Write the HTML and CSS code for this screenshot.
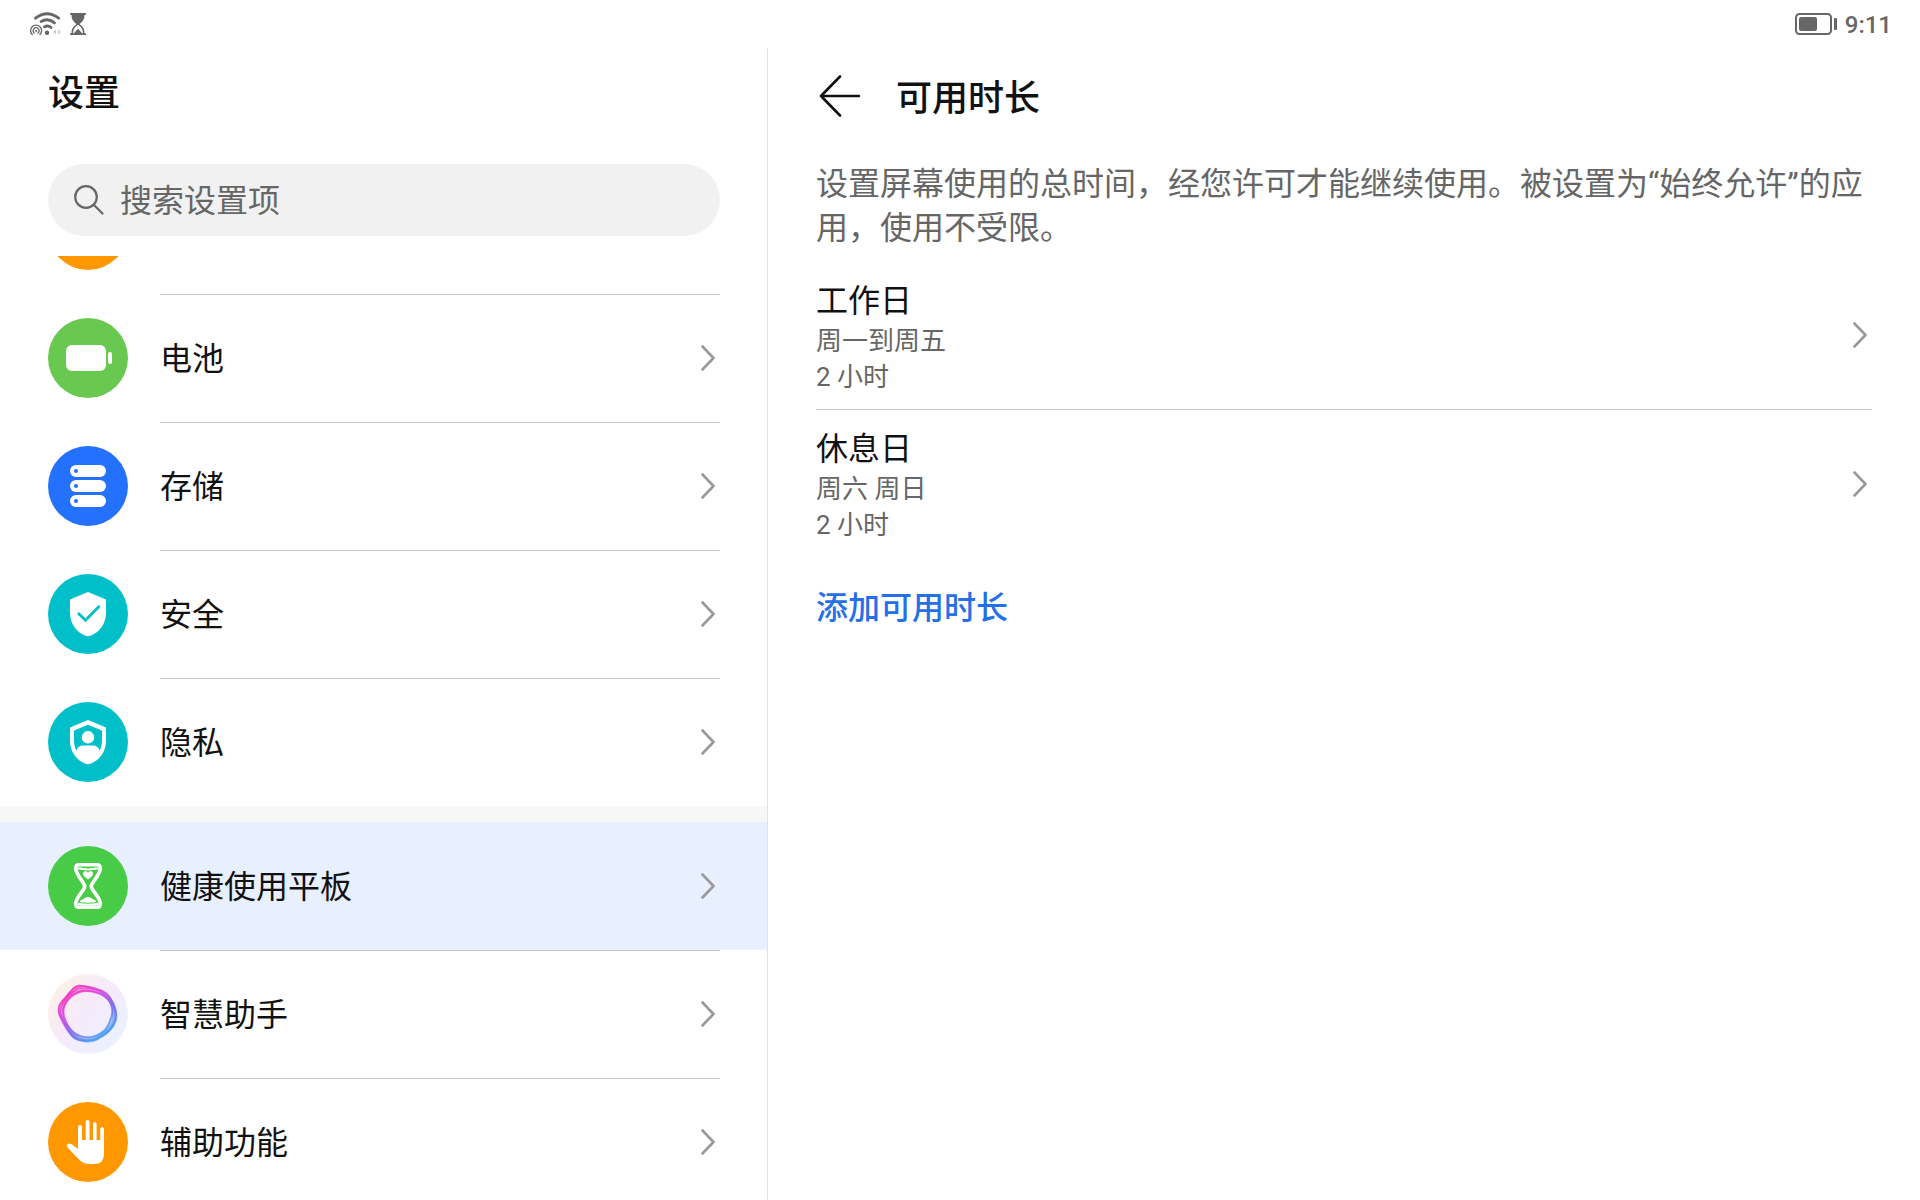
FILE: index.html
```html
<!DOCTYPE html>
<html lang="zh-CN">
<head>
<meta charset="utf-8">
<meta name="viewport" content="width=device-width, initial-scale=1">
<title>设置</title>
<link rel="stylesheet" href="styles.css">
</head>
<body>
<svg class="defs" aria-hidden="true">
  <symbol id="chevron" viewBox="0 0 14 26"><path d="M1.5 1.5 12.5 13 1.5 24.5" fill="none" stroke="currentColor" stroke-width="2.6" stroke-linecap="round" stroke-linejoin="round"/></symbol>
</svg>
<header class="status">
  <div class="status-group">
    <svg width="32" height="24" viewBox="0 0 32 24" fill="none" stroke="#666" stroke-linecap="round">
      <path d="M5.5 6.2Q17 -2.6 28.700 6.200" stroke-width="2.800"/>
      <path d="M11 9.600Q17.500 5.400 24.500 10.800" stroke-width="2.800"/>
      <path d="M14.500 14.800Q18 13 21 15.500" stroke-width="2.800"/>
      <circle cx="17" cy="20.700" r="2.200" fill="#666" stroke="none"/>
      <path d="M2.200 22.500A5.500 5.500 0 1 1 10 22.500M4.200 21A3 3 0 1 1 8 21" stroke-width="1.300"/>
      <circle cx="6.100" cy="19" r="1" fill="#666" stroke="none"/>
      <path d="M26 17.500v5l-3-2.500zM28 17.500v5l3-2.500z" fill="#ccc" stroke="none"/>
    </svg>
    <svg width="16" height="22" viewBox="0 0 16 22">
      <path d="M0 0h16v1.700h-1.500c0 5-2 6.800-5 9.300 3 2.500 5 4.300 5 9.300H16V22H0v-1.700h1.500c0-5 2-6.800 5-9.300-3-2.500-5-4.300-5-9.300H0z" fill="#666"/>
      <path d="M8 11.700c-3.200 2.300-4.800 4.400-5 8.600h.8L8 15.800l4.200 4.500h.8c-.2-4.200-1.800-6.300-5-8.600z" fill="#fff"/>
    </svg>
  </div>
  <div class="status-group">
    <svg width="42" height="22" viewBox="0 0 42 22">
      <rect x="1" y="1" width="35" height="20" rx="3.500" fill="none" stroke="#666" stroke-width="2"/>
      <rect x="4" y="4" width="18" height="14" rx="2" fill="#666"/>
      <rect x="39" y="5" width="3" height="12" rx="1" fill="#666"/>
    </svg>
    <time>9:11</time>
  </div>
</header>
<main class="panes">
  <nav class="side" aria-label="设置">
    <h1 class="title side-title">设置</h1>
    <label class="search">
      <svg width="30" height="30" viewBox="0 0 30 30" fill="none" stroke="#666" stroke-width="2.200" stroke-linecap="round"><circle cx="12" cy="12" r="10.800"/><path d="M19.700 19.700 28.500 28.500"/></svg>
      <input type="search" placeholder="搜索设置项" aria-label="搜索设置项">
    </label>
    <ul class="menu">
      <li class="row row-cut"><svg class="icon" viewBox="0 0 80 80"><circle cx="40" cy="40" r="40" fill="#ff9800"/></svg></li>
      <li><a class="row" href="#battery">
        <svg class="icon" viewBox="0 0 80 80"><circle cx="40" cy="40" r="40" fill="#69c850"/><g fill="#fff"><rect x="18" y="27" width="40" height="26" rx="6"/><rect x="60" y="34" width="4" height="12" rx="2"/></g></svg>
        <span class="row-body">电池<svg class="chev"><use href="#chevron"/></svg></span></a></li>
      <li><a class="row" href="#storage">
        <svg class="icon" viewBox="0 0 80 80"><circle cx="40" cy="40" r="40" fill="#2470ff"/><g fill="#fff"><rect x="22" y="19" width="36" height="12" rx="6"/><rect x="22" y="34" width="36" height="12" rx="6"/><rect x="22" y="49" width="36" height="12" rx="6"/></g><g fill="#2470ff"><circle cx="28" cy="25" r="2"/><circle cx="28" cy="40" r="2"/><circle cx="28" cy="55" r="2"/></g></svg>
        <span class="row-body">存储<svg class="chev"><use href="#chevron"/></svg></span></a></li>
      <li><a class="row" href="#security">
        <svg class="icon" viewBox="0 0 80 80"><circle cx="40" cy="40" r="40" fill="#00bfc9"/><path d="M40 18 58 25.500V39C58 50 51 58.500 43 61.500Q40 62.700 37 61.500C29 58.500 22 50 22 39V25.500Z" fill="#fff"/><path d="M30 39 37.500 46.300 51.500 32" fill="none" stroke="#00bfc9" stroke-width="2.800"/></svg>
        <span class="row-body">安全<svg class="chev"><use href="#chevron"/></svg></span></a></li>
      <li><a class="row" href="#privacy">
        <svg class="icon" viewBox="0 0 80 80"><circle cx="40" cy="40" r="40" fill="#00bfc9"/><path d="M40 18 58 25.500V39C58 50 51 58.500 43 61.500Q40 62.700 37 61.500C29 58.500 22 50 22 39V25.500Z" fill="#fff"/><path d="M40 22.800 54 28.500V39Q54 44.500 51.800 48.500 49.500 43.500 45 43.500H35Q30.500 43.500 28.200 48.500 26 44.500 26 39V28.500Z" fill="#00bfc9"/><circle cx="40" cy="35.300" r="6.200" fill="#fff"/></svg>
        <span class="row-body">隐私<svg class="chev"><use href="#chevron"/></svg></span></a></li>
      <li class="band"><a class="row row-on" href="#balance" aria-current="page">
        <svg class="icon" viewBox="0 0 80 80"><circle cx="40" cy="40" r="40" fill="#48cc48"/><path d="M31 18.800H49Q52.300 18.800 52.300 22.500C51.500 30 43.300 36.500 43.300 40.500S51.500 50 52.300 57.500Q52.300 61.200 49 61.200H31Q27.700 61.200 27.700 57.500C28.500 50 36.700 44.500 36.700 40.500S28.500 30 27.700 22.500Q27.700 18.800 31 18.800Z" fill="none" stroke="#fff" stroke-width="3.600"/><path d="M30 22.300Q40 24.500 50 22.300M30 57.700Q40 60 50 57.700" stroke="#fff" stroke-width="2" fill="none"/><path d="M40 33.500C37.500 31.500 35 30 35 27.500 35 25 38.500 24.500 40 26.700 41.500 24.500 45 25 45 27.500 45 30 42.500 31.500 40 33.500ZM31.500 56 33 54Q35 53.500 37 52 40 49.500 43 52 45 53.500 47 54L48.500 56Q40 57.500 31.500 56Z" fill="#fff"/></svg>
        <span class="row-body">健康使用平板<svg class="chev"><use href="#chevron"/></svg></span></a></li>
      <li><a class="row" href="#assistant">
        <svg class="icon" viewBox="0 0 80 80">
          <defs>
            <linearGradient id="halo" x1="0" y1="0.100" x2="1" y2="0.900"><stop offset="0" stop-color="#fef2e4"/><stop offset="0.450" stop-color="#f6eafb"/><stop offset="1" stop-color="#e8f3ff"/></linearGradient>
            <linearGradient id="ring" gradientUnits="userSpaceOnUse" x1="22" y1="14" x2="56" y2="66"><stop offset="0" stop-color="#fb1fb4"/><stop offset="0.300" stop-color="#dc3fe0"/><stop offset="0.600" stop-color="#7d66ee"/><stop offset="1" stop-color="#35a8f5"/></linearGradient>
          </defs>
          <circle cx="40" cy="40" r="40" fill="url(#halo)"/>
          <g fill="none" stroke="url(#ring)">
            <path d="M31 11.500C38 11 43 15 51 16 62 18 64 28 67 35 70 43 66 53 58 60 50 67 38 67 30 66 22 64 20 54 14 46 8 37 10 30 17 24 22 19 24 12.500 31 11.500Z" stroke-width="1.600" opacity=".85"/>
            <path d="M33 13C43 12.500 52 16 58 20.500 66 27 69 38 67.500 46 64 58 54 60 49 65 42 69 31 67 26 62 19 55 17 49 12.500 41 10 34 14 28 20 22 25 17 27 13.500 33 13Z" stroke-width="2.800" opacity=".65"/>
            <path d="M36 15.500C46 15 55 18 61 25 66 32 67 40 65 48 60 58 49 66 39 66 28 66 21 59 16 49 12 40 14 29 21 22 27 17 31 15.500 36 15.500Z" stroke-width="3.600" opacity=".6"/>
            <path d="M40 17C50 18 59 21 63 30 66 37 63 47 58 55 50 63 40 65 32 62 22 59 14.500 45 15.500 35 17.500 25 28 16 40 17Z" stroke-width="2" opacity=".8"/>
          </g>
        </svg>
        <span class="row-body">智慧助手<svg class="chev"><use href="#chevron"/></svg></span></a></li>
      <li><a class="row" href="#accessibility">
        <svg class="icon" viewBox="0 0 80 80"><circle cx="40" cy="40" r="40" fill="#ff9800"/><path d="M30 47V25Q30 23 32 23T34 25V38H37.700V20Q37.700 18 39.600 18T41.500 20V38H45V22Q45 20 46.800 20T48.600 22V38H52.300V27Q52.300 25 54.200 25T56 27V52Q56 62 46 62H42Q35 62 31 57.500L19.500 45.500Q18 43.500 19.200 42.200 20.800 40.700 23.500 42Z" fill="#fff"/></svg>
        <span class="row-body">辅助功能<svg class="chev"><use href="#chevron"/></svg></span></a></li>
    </ul>
  </nav>
  <section class="detail">
    <div class="detail-head">
      <button class="back" type="button" aria-label="返回"><svg width="42" height="42" viewBox="0 0 42 42" fill="none" stroke="#111" stroke-width="2.600" stroke-linecap="round" stroke-linejoin="round"><path d="M21 1.500 2 21 21 40.500M2 21H40"/></svg></button>
      <h2 class="title">可用时长</h2>
    </div>
    <p class="desc">设置屏幕使用的总时间，经您许可才能继续使用。被设置为“始终允许”的应用，使用不受限。</p>
    <a class="slot" href="#weekday"><span class="slot-text"><span class="slot-name">工作日</span><span>周一到周五</span><span>2 小时</span></span><svg class="chev"><use href="#chevron"/></svg></a>
    <a class="slot" href="#weekend"><span class="slot-text"><span class="slot-name">休息日</span><span>周六 周日</span><span>2 小时</span></span><svg class="chev"><use href="#chevron"/></svg></a>
    <button class="add" type="button">添加可用时长</button>
  </section>
</main>
</body>
</html>
```
FILE: styles.css
```css
* { box-sizing: border-box; }
body {
  margin: 0;
  height: 100vh;
  overflow: hidden;
  display: flex;
  flex-direction: column;
  background: #fff;
  color: #111;
  font: 32px/44px Roboto, "Noto Sans CJK SC", sans-serif;
}
a { color: inherit; text-decoration: none; }
button, input { border: 0; padding: 0; background: none; font: inherit; color: inherit; }
svg { display: block; flex: none; }
.defs { position: absolute; width: 0; height: 0; }

.status {
  display: flex;
  flex: none;
  justify-content: space-between;
  align-items: center;
  height: 48px;
  padding: 0 28px 0 30px;
  color: #666;
  font-size: 24px;
  font-weight: 500;
}
.status-group { display: flex; align-items: center; gap: 8px; }
.status time { padding-top: 2px; }

.panes { flex: 1; min-height: 0; display: grid; grid-template-columns: 2fr 3fr; }
.side { display: flex; flex-direction: column; min-height: 0; border-right: 1px solid #e2e2e2; }
.title { margin: 0; font-size: 36px; font-weight: 500; line-height: 48px; }
.side-title { padding: 22px 48px 46px; }
.search {
  display: flex;
  flex: none;
  align-items: center;
  gap: 16px;
  height: 72px;
  margin: 0 47px 20px 48px;
  padding: 0 26px;
  border-radius: 36px;
  background: #f1f1f1;
}
.search input { flex: 1; min-width: 0; padding-top: 2px; outline: 0; }
.search input::placeholder { color: #666; opacity: 1; }

.menu { flex: 1; min-height: 0; overflow: hidden; margin: 0; padding: 0; list-style: none; }
.row { display: flex; align-items: center; gap: 32px; height: 128px; padding: 0 47px 0 48px; }
.row-cut { margin-top: -90px; }
.icon { width: 80px; height: 80px; }
.row-body {
  flex: 1;
  display: flex;
  align-items: center;
  justify-content: space-between;
  height: 128px;
  padding: 1px 5px 0 0;
  border-top: 1px solid #c8c8c8;
}
.row-body .chev { margin-bottom: 3px; }
.band { border-top: 16px solid #f7f7f7; }
.row-on { background: #e8efff; }
.row-on .row-body { border-color: transparent; }
.chev { width: 14px; height: 26px; color: #999; }

.detail { padding: 21px 48px; }
.detail-head { display: flex; align-items: center; gap: 35px; padding-left: 3px; }
.detail-head .title { padding-top: 6px; }
.back { cursor: pointer; }
.desc { margin: 39px 0 11px; color: #666; }
.slot {
  display: flex;
  align-items: center;
  justify-content: space-between;
  height: 148px;
  padding-right: 5px;
}
.slot + .slot { border-top: 1px solid #c8c8c8; }
.slot-text { display: flex; flex-direction: column; padding-top: 3px; color: #666; font-size: 26px; line-height: 36px; }
.slot-name { color: #111; font-size: 32px; line-height: 44px; }
.add { display: block; margin-top: 29px; color: #256fe8; font-weight: 500; cursor: pointer; }
```
